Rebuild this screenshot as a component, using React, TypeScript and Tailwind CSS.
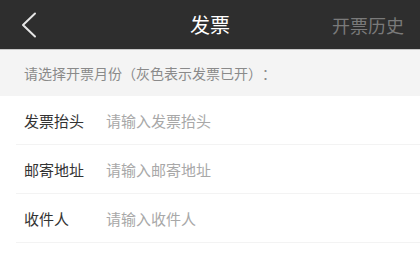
const rows = [
  { label: '发票抬头', placeholder: '请输入发票抬头' },
  { label: '邮寄地址', placeholder: '请输入邮寄地址' },
  { label: '收件人', placeholder: '请输入收件人' },
]

export default function App() {
  return (
    <div
      className="w-[420px] h-[260px] overflow-hidden bg-white"
      style={{ fontFamily: '"Noto Sans CJK SC", "Noto Sans", sans-serif' }}
    >
      {/* Header */}
      <div className="h-[50px] bg-[#2e2e2e] border-b border-[#c8c8c8] flex items-center">
        <button className="w-[100px] h-full flex items-center pl-[21px]">
          <svg width="16" height="26" viewBox="0 0 16 26" fill="none">
            <path d="M14 1.5 L2 13 L14 24.5" stroke="#e6e6e6" strokeWidth="2" strokeLinecap="round" strokeLinejoin="round" />
          </svg>
        </button>
        <h1 className="flex-1 text-center text-[20px] text-white leading-none">发票</h1>
        <span className="w-[100px] text-right pr-[16px] text-[18px] text-[#7a7a7a] leading-none">开票历史</span>
      </div>

      {/* Tip */}
      <div className="h-[46px] bg-[#f4f4f4] flex items-center px-[24px]">
        <p className="text-[14px] text-[#8a8a8a] leading-none [text-spacing-trim:space-all]">
          请选择开票月份（灰色表示发票已开）：
        </p>
      </div>

      {/* Form rows */}
      <div className="pl-[16px]">
        {rows.map((r) => (
          <div key={r.label} className="h-[49px] flex items-center border-b border-[#f3f3f3] pl-[8px]">
            <span className="w-[82px] text-[15px] text-[#333] leading-none">{r.label}</span>
            <input
              className="flex-1 text-[15px] outline-none bg-transparent placeholder:text-[#a8a8a8] leading-none"
              placeholder={r.placeholder}
            />
          </div>
        ))}
      </div>
    </div>
  )
}
